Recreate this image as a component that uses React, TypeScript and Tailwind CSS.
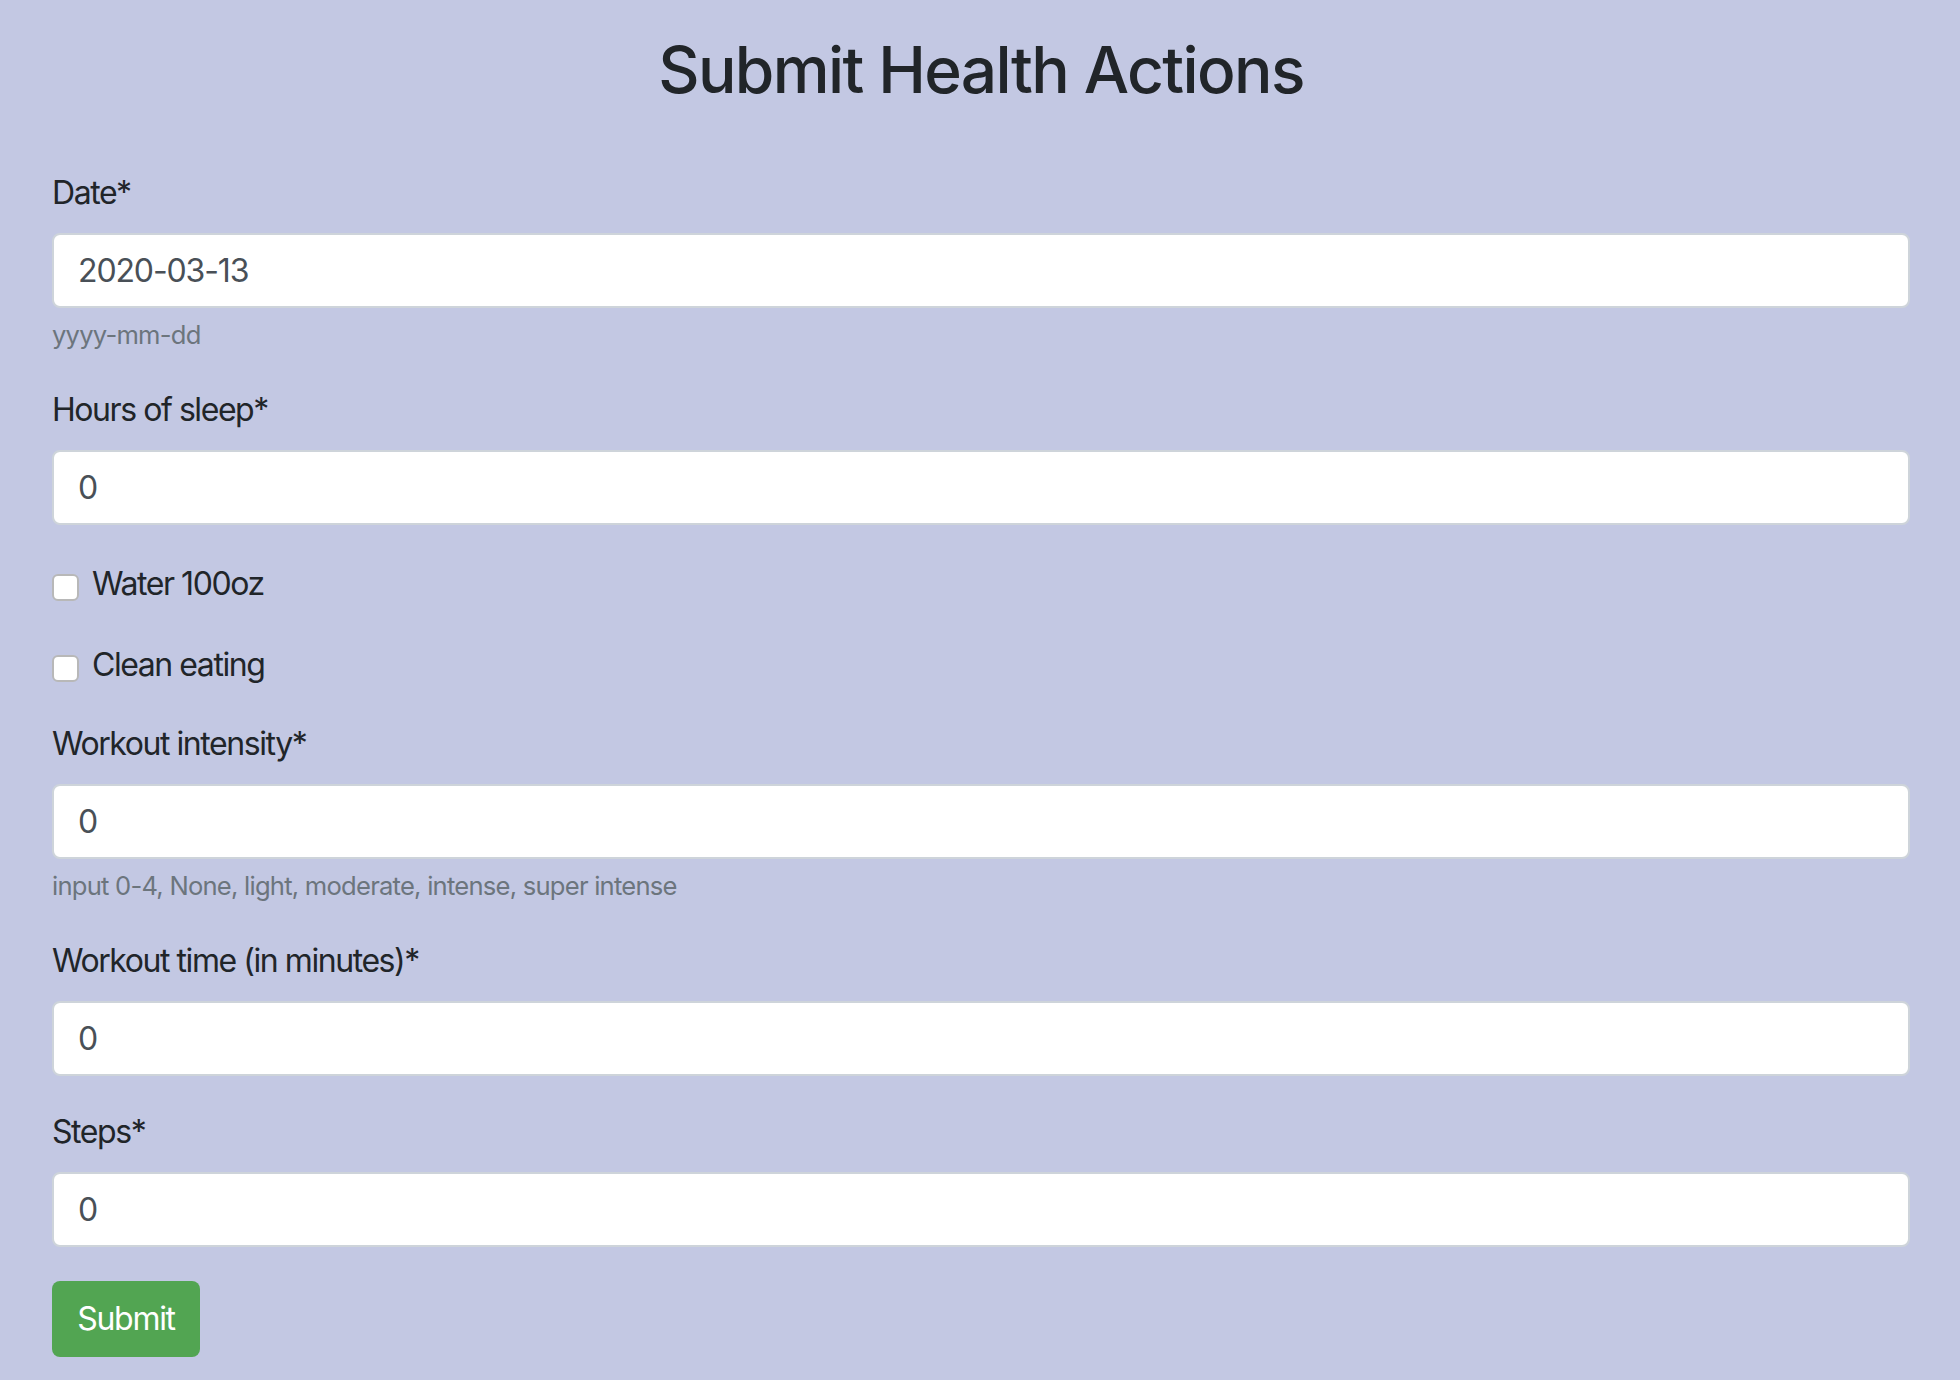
import React from "react";

const Field = ({ label, value, help }: { label: string; value: string; help?: string }) => (
  <div className="mb-[32px]">
    <label className="block text-[32px] leading-[48px] mb-[16px] tracking-[-0.045em] text-[#212529]">{label}</label>
    <input
      type="text"
      defaultValue={value}
      className="block w-full h-[75px] px-[24px] text-[32px] tracking-[-0.035em] text-[#495057] bg-white border-2 border-[#ced4da] rounded-[8px] outline-none"
    />
    {help && (
      <small className="block mt-[8px] text-[25.6px] leading-[38px] tracking-[-0.03em] text-[#6c757d]">{help}</small>
    )}
  </div>
);

const Check = ({ label }: { label: string }) => (
  <div className="flex items-start h-[49px]">
    <input
      type="checkbox"
      className="appearance-none mt-[14px] w-[27px] h-[27px] bg-white border-2 border-[#b8b8b8] rounded-[6px] shrink-0"
    />
    <label className="ml-[13px] text-[32px] leading-[48px] tracking-[-0.045em] text-[#212529]">{label}</label>
  </div>
);

export default function App() {
  return (
    <div className="min-h-[1380px] bg-[#c3c8e3] pl-[52px] pr-[50px] pt-[32px] font-['Inter','Liberation_Sans',sans-serif]">
      <h2 className="text-center text-[64px] leading-[1.2] font-medium tracking-[-0.025em] text-[#212529]">
        Submit Health Actions
      </h2>
      <form className="mt-[60px]">
        <Field label="Date*" value="2020-03-13" help="yyyy-mm-dd" />
        <Field label="Hours of sleep*" value="0" />
        <div className="pt-[3px] mb-[30px] flex flex-col gap-[32px]">
          <Check label="Water 100oz" />
          <Check label="Clean eating" />
        </div>
        <Field
          label="Workout intensity*"
          value="0"
          help="input 0-4, None, light, moderate, intense, super intense"
        />
        <Field label="Workout time (in minutes)*" value="0" />
        <Field label="Steps*" value="0" />
        <button
          type="submit"
          className="mt-[2px] h-[76px] w-[148px] rounded-[8px] bg-[#52a552] text-white text-[32px] tracking-[-0.04em]"
        >
          Submit
        </button>
      </form>
    </div>
  );
}
